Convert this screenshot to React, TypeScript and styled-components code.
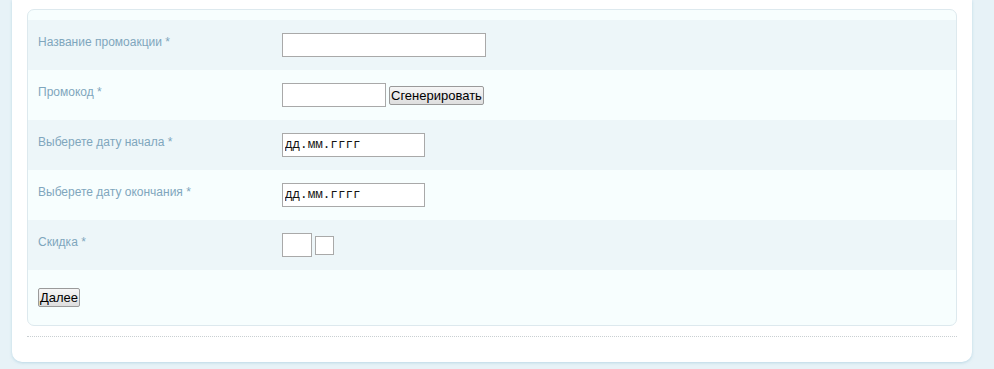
import styled, { createGlobalStyle } from "styled-components";

const GlobalStyle = createGlobalStyle`
  body {
    margin: 0;
    background: #e7f2f7;
    font-family: "Liberation Sans", Arial, sans-serif;
  }
`;

const Page = styled.div`
  padding: 0 22px 8px 12px;
`;

const Panel = styled.div`
  background: #fff;
  border-radius: 0 0 10px 10px;
  box-shadow: 0 1px 3px rgba(150, 195, 215, 0.55);
  padding: 9px 15px 25px 15px;
`;

const FormBox = styled.div`
  border: 1px solid #dde9ee;
  border-radius: 7px;
  background: #f7fefe;
  padding-top: 10px;
  overflow: hidden;
`;

const Row = styled.div<{ $shaded?: boolean }>`
  display: flex;
  align-items: flex-start;
  height: 50px;
  box-sizing: border-box;
  padding: 13px 0 0 10px;
  background: ${(p) => (p.$shaded ? "#edf6f9" : "#f7fefe")};
`;

const Label = styled.div`
  width: 244px;
  padding-top: 2px;
  font-size: 12px;
  line-height: 14px;
  color: #7fa6bd;
`;

const Field = styled.div`
  display: flex;
  align-items: center;
  gap: 3px;
`;

const TextInput = styled.input<{ $w: number }>`
  width: ${(p) => p.$w}px;
  height: 24px;
  box-sizing: border-box;
  border: 1px solid #a9a9a9;
  background: #fff;
  margin: 0;
  padding: 0 2px;
  font-family: "Liberation Mono", monospace;
  font-size: 12.6px;
  color: #111;
  outline: none;
`;

const SmallBox = styled.div`
  width: 19px;
  height: 19px;
  box-sizing: border-box;
  border: 1px solid #a9a9a9;
  background: #fff;
`;

const Button = styled.button`
  height: 19px;
  box-sizing: border-box;
  padding: 0 1px;
  margin: 0;
  border: 1px solid #9a9a9a;
  border-radius: 2px;
  background: linear-gradient(#f6f6f6, #dedede);
  font-family: "Liberation Sans", Arial, sans-serif;
  font-size: 13px;
  line-height: 15px;
  color: #000;
`;

const Footer = styled.div`
  height: 55px;
  box-sizing: border-box;
  padding: 18px 0 0 10px;
`;

const Dotted = styled.div`
  margin-top: 10px;
  border-top: 1px dotted #c9cfd2;
`;

const fields = [
  { label: "Название промоакции *", kind: "text" },
  { label: "Промокод *", kind: "code" },
  { label: "Выберете дату начала *", kind: "date" },
  { label: "Выберете дату окончания *", kind: "date" },
  { label: "Скидка *", kind: "discount" },
];

const renderField = (kind: string) => {
  switch (kind) {
    case "text":
      return <TextInput $w={204} />;
    case "code":
      return (
        <>
          <TextInput $w={104} />
          <Button>Сгенерировать</Button>
        </>
      );
    case "date":
      return <TextInput $w={143} readOnly value="дд.мм.гггг" />;
    default:
      return (
        <>
          <TextInput $w={30} />
          <SmallBox />
        </>
      );
  }
};

const App = () => {
  return (
    <>
      <GlobalStyle />
      <Page>
        <Panel>
          <FormBox>
            {fields.map((f, i) => (
              <Row key={f.label} $shaded={i % 2 === 0}>
                <Label>{f.label}</Label>
                <Field>{renderField(f.kind)}</Field>
              </Row>
            ))}
            <Footer>
              <Button>Далее</Button>
            </Footer>
          </FormBox>
          <Dotted />
        </Panel>
      </Page>
    </>
  );
};

export default App;
